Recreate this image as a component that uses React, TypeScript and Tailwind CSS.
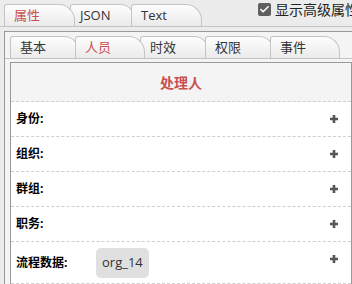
import { Check } from "lucide-react";

const outerTabs = [
  { label: "属性", w: "w-[71px]", active: true },
  { label: "JSON", w: "w-[66px]", active: false },
  { label: "Text", w: "w-[71px]", active: false },
];

const innerTabs = [
  { label: "基本", active: false },
  { label: "人员", active: true },
  { label: "时效", active: false },
  { label: "权限", active: false },
  { label: "事件", active: false },
];

const rows = ["身份:", "组织:", "群组:", "职务:"];

function Plus() {
  return (
    <svg width="10" height="10" viewBox="0 0 10 10" className="text-[#555]">
      <path d="M5 1v8M1 5h8" stroke="currentColor" strokeWidth="2.6" />
    </svg>
  );
}

export default function App() {
  return (
    <div
      className="h-[284px] w-[352px] overflow-hidden bg-[#ececec] text-[13px]"
      style={{ fontFamily: '"Open Sans", "Noto Sans CJK SC", sans-serif' }}
    >
      {/* top tab strip */}
      <div className="flex h-[27px] items-end border-b border-[#c4c4c4] pl-[4px]">
        {outerTabs.map((t, i) => (
          <div
            key={t.label}
            className={`relative flex h-[22px] items-center rounded-tl-[3px] rounded-tr-[16px] border border-b-0 border-[#c4c4c4] bg-gradient-to-b from-[#fdfdfd] to-[#ebebeb] pl-[9px] leading-none ${t.w} ${i > 0 ? "-ml-[5px]" : ""} ${t.active ? "z-10 text-[#c9504f]" : "text-[#333]"}`}
          >
            {t.label}
          </div>
        ))}
        <div className="ml-auto mb-[6px] flex shrink-0 items-center gap-[4px] whitespace-nowrap text-[14px] text-[#222] -mr-[7px]">
          <span className="flex h-[13px] w-[13px] items-center justify-center rounded-[2px] bg-[#5f5f5f]">
            <Check size={11} strokeWidth={3.5} color="#fff" />
          </span>
          显示高级属性
        </div>
      </div>

      {/* outer panel */}
      <div className="ml-[4px] mt-[4px] border-l border-t border-[#9a9a9a] bg-[#f4f4f4]">
        <div className="flex h-[27px] items-end border-b border-[#c4c4c4] pl-[5px]">
          {innerTabs.map((t, i) => (
            <div
              key={t.label}
              className={`relative flex h-[22px] w-[70px] items-center rounded-tl-[3px] rounded-tr-[16px] border border-b-0 border-[#c4c4c4] bg-gradient-to-b from-[#fdfdfd] to-[#ebebeb] pl-[9px] leading-none ${i > 0 ? "-ml-[5px]" : ""} ${t.active ? "z-10 text-[#c9504f]" : "text-[#333]"}`}
            >
              {t.label}
            </div>
          ))}
        </div>

        <div className="ml-[5px] mt-[3px] w-[342px] border-l border-r border-t border-[#9a9a9a] bg-white">
          <div className="flex h-[39px] items-center justify-center border-b border-dashed border-[#cfcfcf] bg-[#f4f4f4] text-[14px] font-bold text-[#c9504f]">
            处理人
          </div>
          {rows.map((r) => (
            <div
              key={r}
              className="flex h-[35px] items-center justify-between border-b border-dashed border-[#cfcfcf] pl-[5px] pr-[12px] text-[12px] font-bold text-black"
            >
              <span>{r}</span>
              <Plus />
            </div>
          ))}
          <div className="flex h-[42px] items-center border-b border-dashed border-[#cfcfcf] pl-[5px] pr-[12px] text-[12px] font-bold text-black">
            <span className="w-[80px]">流程数据:</span>
            <span className="flex h-[30px] items-center rounded-[5px] bg-[#e0e0e0] px-[6px] text-[13px] font-normal text-[#333]">
              org_14
            </span>
            <span className="ml-auto -mt-[8px]">
              <Plus />
            </span>
          </div>
        </div>
      </div>
    </div>
  );
}
